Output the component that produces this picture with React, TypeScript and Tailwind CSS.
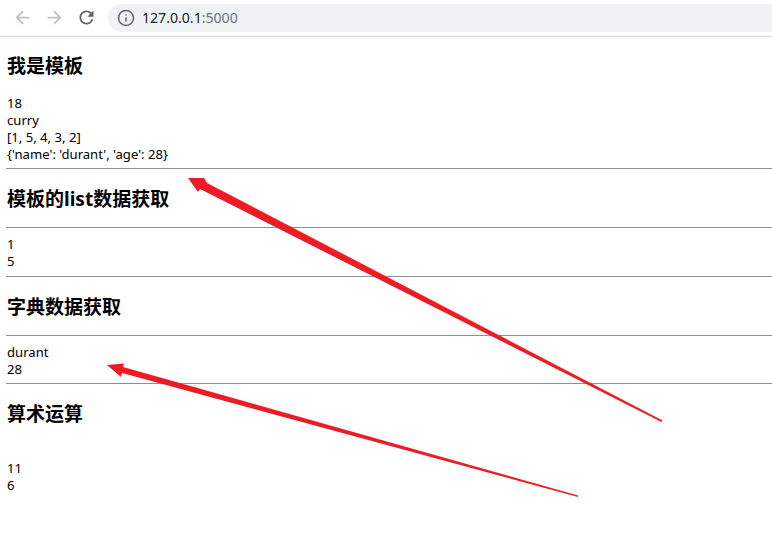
import { Info } from 'lucide-react';

const CJK = "font-['Noto_Sans','Noto_Sans_CJK_SC',sans-serif]";

function Heading({ children, className }: { children: string; className: string }) {
  return <h3 className={`text-[19px] leading-[25px] font-bold text-black ${className}`}>{children}</h3>;
}

function Lines({ items }: { items: string[] }) {
  return (
    <div className="text-[13.1px] leading-[17px] text-black">
      {items.map((line) => (
        <div key={line}>{line}</div>
      ))}
    </div>
  );
}

function Rule({ className }: { className: string }) {
  return <div className={`-ml-px h-px bg-[#8f8f8f] ${className}`} />;
}

function ToolIcon({ d, className }: { d: string; className: string }) {
  return (
    <svg width="21" height="21" viewBox="0 0 24 24" fill="currentColor" className={className}>
      <path d={d} />
    </svg>
  );
}

function Toolbar() {
  return (
    <div className="flex h-[37px] items-center border-b border-[#d9dbde] bg-white pb-px">
      <ToolIcon className="ml-[12px] text-[#bdc1c6]" d="M20 11H7.83l5.59-5.59L12 4l-8 8 8 8 1.41-1.41L7.83 13H20v-2z" />
      <ToolIcon className="ml-[11px] text-[#bdc1c6]" d="M4 11h12.17l-5.59-5.59L12 4l8 8-8 8-1.41-1.41L16.17 13H4v-2z" />
      <ToolIcon
        className="ml-[11px] text-[#5f6368]"
        d="M17.65 6.35A7.958 7.958 0 0 0 12 4c-4.42 0-7.99 3.58-7.99 8s3.57 8 7.99 8c3.73 0 6.84-2.55 7.73-6h-2.08A5.99 5.99 0 0 1 12 18c-3.31 0-6-2.69-6-6s2.69-6 6-6c1.66 0 3.14.69 4.22 1.78L13 11h7V4l-2.35 2.35z"
      />
      <div className="ml-[11px] flex h-[28px] flex-1 items-center rounded-l-full bg-[#f0f3f4] pl-[9px]">
        <Info className="h-[18px] w-[18px] text-[#5f6368]" strokeWidth={2} />
        <span className="ml-[7px] text-[14.1px] text-[#202124]">
          127.0.0.1<span className="text-[#6a7480]">:5000</span>
        </span>
      </div>
    </div>
  );
}

export default function App() {
  return (
    <div className={`relative h-[536px] w-[772px] overflow-hidden bg-white ${CJK}`}>
      <Toolbar />
      <div className="pl-[7px]">
        <Heading className="pt-[17px]">我是模板</Heading>
        <div className="pt-[16px]">
          <Lines items={['18', 'curry', '[1, 5, 4, 3, 2]', "{'name': 'durant', 'age': 28}"]} />
        </div>
        <Rule className="mt-[5px]" />
        <Heading className="pt-[18px]">模板的list数据获取</Heading>
        <Rule className="mt-[15px]" />
        <div className="pt-[8px]">
          <Lines items={['1', '5']} />
        </div>
        <Rule className="mt-[6px]" />
        <Heading className="pt-[18px]">字典数据获取</Heading>
        <Rule className="mt-[15px]" />
        <div className="pt-[8px]">
          <Lines items={['durant', '28']} />
        </div>
        <Rule className="mt-[5px]" />
        <Heading className="pt-[18px]">算术运算</Heading>
        <div className="pt-[33px]">
          <Lines items={['11', '6']} />
        </div>
      </div>

      {/* red annotation arrows drawn over the page */}
      <svg className="absolute top-0 left-0" width="772" height="536" viewBox="0 0 772 536">
        <polygon points="662.5,420.5 207,183 204,178 188,178 198,192 200,189 661.5,422" fill="#ed1c24" />
        <polygon points="578,495.5 123,367 124,363.5 107,365 121,377 122,373 578,497" fill="#ed1c24" />
      </svg>
    </div>
  );
}
